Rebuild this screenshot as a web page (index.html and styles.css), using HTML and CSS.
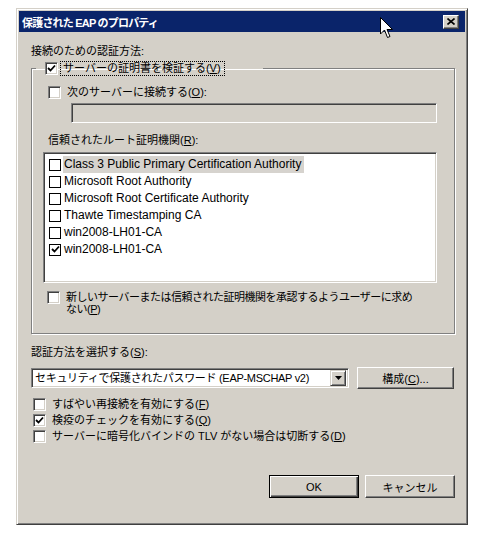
FILE: index.html
```html
<!DOCTYPE html>
<html lang="ja">
<head>
    <meta charset="UTF-8">
    <meta name="viewport" content="width=device-width, initial-scale=1.0">
    <title>保護された EAP のプロパティ</title>
    <link rel="stylesheet" href="styles.css">
</head>
<body>
    <div class="dialog">
        <div class="titlebar">
            <span class="title">保護された EAP のプロパティ</span>
            <span class="close-btn">
                <svg width="8" height="7" viewBox="0 0 8 7"><path d="M0.5 0.5 L7.5 6.5 M7.5 0.5 L0.5 6.5" stroke="#000" stroke-width="1.6"/></svg>
            </span>
        </div>

        <!-- mouse pointer over the title bar -->
        <svg class="cursor" width="14" height="22" viewBox="0 0 14 22">
            <path d="M0.5 0.5 L0.5 17 L4.5 13 L7.5 20.5 L10 19.5 L7 12.5 L12.5 12.5 Z" fill="#fff" stroke="#000" stroke-width="1"/>
        </svg>

        <div class="dialog-body">
            <div class="caption">接続のための認証方法:</div>

            <fieldset class="group">
                <legend class="group-legend">
                    <span class="check checked">
                        <svg width="9" height="9" viewBox="0 0 9 9"><path d="M1 4 L3.5 6.5 L8 1.5" fill="none" stroke="#000" stroke-width="1.8"/></svg>
                    </span>
                    <span class="focus-label">サーバーの証明書を検証する(<u>V</u>)</span>
                </legend>

                <div class="check-row server-row">
                    <span class="check"></span>
                    <span>次のサーバーに接続する(<u>O</u>):</span>
                </div>
                <div class="textbox"></div>

                <div class="caption list-caption">信頼されたルート証明機関(<u>R</u>):</div>
                <div class="listbox">
                    <div class="list-item"><span class="flat-check"></span><span class="item-text selected">Class 3 Public Primary Certification Authority</span></div>
                    <div class="list-item"><span class="flat-check"></span><span class="item-text">Microsoft Root Authority</span></div>
                    <div class="list-item"><span class="flat-check"></span><span class="item-text">Microsoft Root Certificate Authority</span></div>
                    <div class="list-item"><span class="flat-check"></span><span class="item-text">Thawte Timestamping CA</span></div>
                    <div class="list-item"><span class="flat-check"></span><span class="item-text">win2008-LH01-CA</span></div>
                    <div class="list-item">
                        <span class="flat-check">
                            <svg width="9" height="9" viewBox="0 0 9 9"><path d="M1 4 L3.5 6.5 L8 1.5" fill="none" stroke="#000" stroke-width="1.8"/></svg>
                        </span>
                        <span class="item-text">win2008-LH01-CA</span>
                    </div>
                </div>

                <div class="check-row prompt-row">
                    <span class="check"></span>
                    <span class="wrap-text">新しいサーバーまたは信頼された証明機関を承認するようユーザーに求め<br>ない(<u>P</u>)</span>
                </div>
            </fieldset>

            <div class="caption method-caption">認証方法を選択する(<u>S</u>):</div>
            <div class="method-row">
                <div class="combo">
                    <span class="combo-text">セキュリティで保護されたパスワード (EAP-MSCHAP v2)</span>
                    <span class="combo-btn">
                        <svg width="7" height="4" viewBox="0 0 7 4"><path d="M0 0 L7 0 L3.5 4 Z" fill="#000"/></svg>
                    </span>
                </div>
                <button class="btn config-btn">構成(<u>C</u>)...</button>
            </div>

            <div class="options">
                <div class="check-row">
                    <span class="check"></span>
                    <span>すばやい再接続を有効にする(<u>F</u>)</span>
                </div>
                <div class="check-row">
                    <span class="check checked">
                        <svg width="9" height="9" viewBox="0 0 9 9"><path d="M1 4 L3.5 6.5 L8 1.5" fill="none" stroke="#000" stroke-width="1.8"/></svg>
                    </span>
                    <span>検疫のチェックを有効にする(<u>Q</u>)</span>
                </div>
                <div class="check-row">
                    <span class="check"></span>
                    <span>サーバーに暗号化バインドの TLV がない場合は切断する(<u>D</u>)</span>
                </div>
            </div>

            <div class="actions">
                <button class="btn default-btn">OK</button>
                <button class="btn">キャンセル</button>
            </div>
        </div>
    </div>
</body>
</html>
```

FILE: styles.css
```css
body {
    margin: 0;
    background: #fff;
    font-family: "Liberation Sans", "Noto Sans CJK JP", sans-serif;
    font-size: 11px;
    color: #000;
}
u {
    text-underline-offset: 1px;
}
.dialog {
    position: relative;
    width: 452px;
    height: 517px;
    margin: 8px 0 0 16px;
    box-sizing: border-box;
    padding: 2px;
    background: #d4d0c8;
    border: 1px solid;
    border-color: #d4d0c8 #404040 #404040 #d4d0c8;
    box-shadow: inset 1px 1px 0 #fff, inset -1px -1px 0 #808080;
}
.titlebar {
    height: 21px;
    background: #0a246a;
    display: flex;
    align-items: center;
    justify-content: space-between;
    padding: 0 6px 0 3px;
}
.title {
    color: #fff;
    font-weight: bold;
    font-size: 11px;
    letter-spacing: -0.8px;
}
.close-btn {
    width: 16px;
    height: 14px;
    box-sizing: border-box;
    background: #d4d0c8;
    border: 1px solid;
    border-color: #fff #404040 #404040 #fff;
    box-shadow: inset -1px -1px 0 #808080;
    display: flex;
    align-items: center;
    justify-content: center;
}
.cursor {
    position: absolute;
    left: 363px;
    top: 8px;
}
.dialog-body {
    padding: 13px 10px 0 12px;
}
.caption {
    line-height: 13px;
    height: 13px;
}
.group {
    margin: 3px 0 0 0;
    padding: 10px 17px 18px 11px;
    border: 1px solid #808080;
    box-shadow: inset 1px 1px 0 #fff, 1px 1px 0 #fff;
    min-width: 0;
}
.group-legend {
    display: flex;
    align-items: center;
    margin-left: -7px;
    padding: 0 38px 0 9px;
    height: 15px;
}
.focus-label {
    margin-left: 2px;
    padding: 0 3px 0 2px;
    line-height: 13px;
    border: 1px dotted #000;
}
.check-row {
    display: flex;
    align-items: center;
    line-height: 13px;
    gap: 6px;
}
.check {
    flex: none;
    width: 13px;
    height: 13px;
    box-sizing: border-box;
    background: #fff;
    border: 1px solid;
    border-color: #808080 #fff #fff #808080;
    box-shadow: inset 1px 1px 0 #404040, inset -1px -1px 0 #d4d0c8;
    display: flex;
    align-items: center;
    justify-content: center;
}
.server-row {
    margin-left: 5px;
    height: 13px;
}
.textbox {
    margin: 4px 0 0 28px;
    height: 20px;
    box-sizing: border-box;
    background: #d4d0c8;
    border: 1px solid;
    border-color: #808080 #fff #fff #808080;
    box-shadow: inset 1px 1px 0 #404040, inset -1px -1px 0 #d4d0c8;
}
.list-caption {
    margin: 11px 0 0 5px;
}
.listbox {
    margin-top: 5px;
    height: 131px;
    box-sizing: border-box;
    padding: 3px 4px;
    background: #fff;
    border: 1px solid;
    border-color: #808080 #fff #fff #808080;
    box-shadow: inset 1px 1px 0 #404040, inset -1px -1px 0 #d4d0c8;
}
.list-item {
    display: flex;
    align-items: center;
    height: 17px;
}
.flat-check {
    flex: none;
    width: 12px;
    height: 12px;
    box-sizing: border-box;
    margin: 0 2px 0 1px;
    border: 1px solid #000;
    background: #fff;
    display: flex;
    align-items: center;
    justify-content: center;
}
.item-text {
    padding: 2px 3px 2px 1px;
    font-size: 12px;
    line-height: 13px;
}
.selected {
    background: #d6d3ce;
}
.prompt-row {
    margin: 8px 0 0 4px;
    align-items: flex-start;
}
.wrap-text {
    white-space: nowrap;
    letter-spacing: -0.5px;
    line-height: 12px;
}
.method-caption {
    margin-top: 12px;
}
.method-row {
    margin-top: 8px;
    display: flex;
    align-items: center;
    gap: 8px;
}
.combo {
    width: 318px;
    height: 20px;
    box-sizing: border-box;
    padding: 2px;
    background: #fff;
    border: 1px solid;
    border-color: #808080 #fff #fff #808080;
    box-shadow: inset 1px 1px 0 #404040, inset -1px -1px 0 #d4d0c8;
    display: flex;
    align-items: center;
    justify-content: space-between;
}
.combo-text {
    padding-left: 1px;
    line-height: 13px;
    letter-spacing: -0.3px;
}
.combo-btn {
    width: 16px;
    height: 16px;
    box-sizing: border-box;
    background: #d4d0c8;
    border: 1px solid;
    border-color: #d4d0c8 #404040 #404040 #d4d0c8;
    box-shadow: inset 1px 1px 0 #fff, inset -1px -1px 0 #808080;
    display: flex;
    align-items: center;
    justify-content: center;
}
.btn {
    height: 22px;
    padding: 0;
    font-family: inherit;
    font-size: 11px;
    color: #000;
    background: #d4d0c8;
    border: 1px solid;
    border-color: #fff #404040 #404040 #fff;
    box-shadow: inset -1px -1px 0 #808080, inset 1px 1px 0 #d4d0c8;
}
.config-btn {
    width: 97px;
}
.options {
    margin-top: 7px;
}
.options .check-row {
    height: 16px;
    margin-left: 2px;
}
.actions {
    margin-top: 31px;
    display: flex;
    justify-content: flex-end;
    gap: 6px;
}
.actions .btn {
    width: 90px;
    height: 23px;
}
.default-btn {
    border-color: #000;
    box-shadow: inset 1px 1px 0 #fff, inset -1px -1px 0 #404040, inset -2px -2px 0 #808080;
}
```
